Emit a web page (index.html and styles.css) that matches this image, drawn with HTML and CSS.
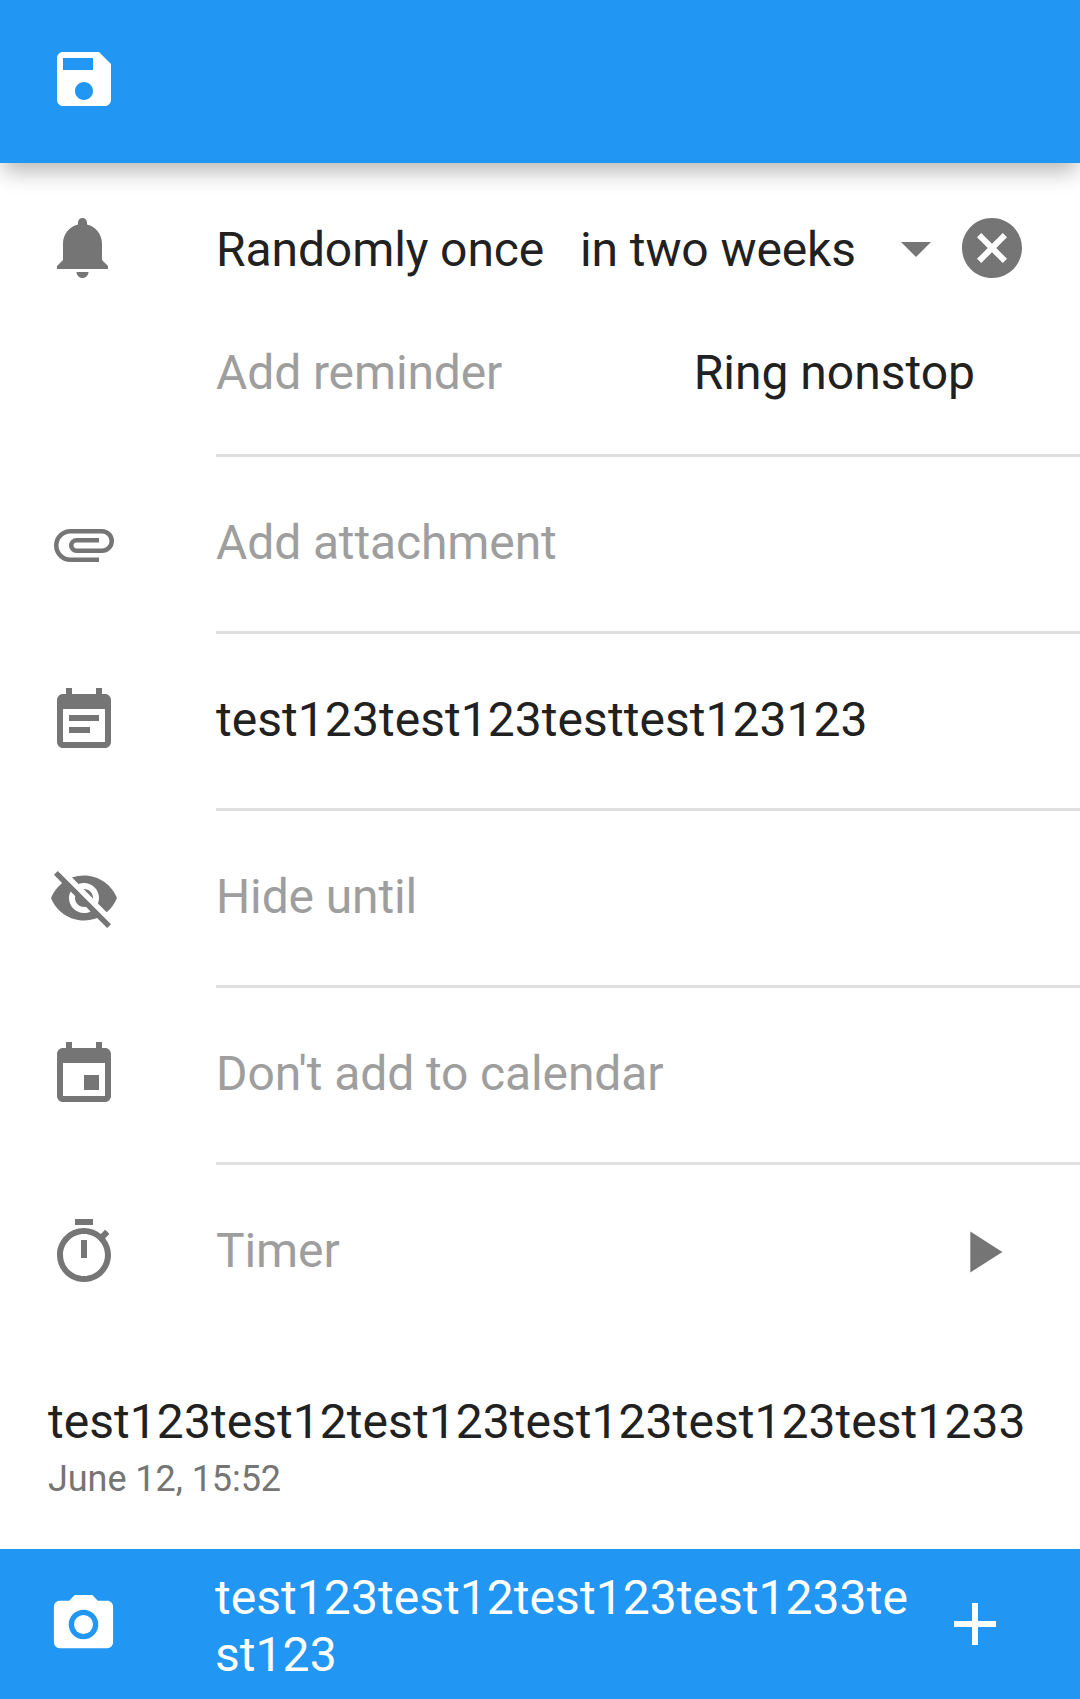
FILE: index.html
```html
<!DOCTYPE html>
<html lang="en">
<head>
<meta charset="utf-8">
<title>Edit task</title>
<link rel="stylesheet" href="styles.css">
</head>
<body>
<div class="screen">
  <header class="toolbar">
    <svg class="icon" viewBox="0 0 24 24"><path d="M17 3H5c-1.11 0-2 .9-2 2v14c0 1.1.89 2 2 2h14c1.1 0 2-.9 2-2V7l-4-4zm-5 16c-1.66 0-3-1.34-3-3s1.34-3 3-3 3 1.34 3 3-1.34 3-3 3zm3-10H5V5h10v4z"/></svg>
  </header>

  <main class="rows">
    <section class="row row-reminder">
      <svg class="icon" viewBox="0 0 24 24"><path d="M11.5 22c1.1 0 2-.9 2-2h-4c0 1.1.9 2 2 2zm6.5-6v-5.5c0-3.07-2.13-5.64-5-6.32V3.5c0-.83-.67-1.5-1.5-1.5S10 2.67 10 3.5v.68c-2.87.68-5 3.25-5 6.32V16l-2 2v1h17v-1l-2-2z"/></svg>
      <div class="content">
        <div class="line line-first">
          <span class="label">Randomly once</span>
          <span class="interval">in two weeks</span>
          <svg class="icon caret" viewBox="0 0 24 24"><path d="M7 10l5 5 5-5z"/></svg>
          <svg class="icon" viewBox="0 0 24 24"><path d="M12 2C6.47 2 2 6.47 2 12s4.47 10 10 10 10-4.47 10-10S17.53 2 12 2zm5 13.59L15.59 17 12 13.41 8.41 17 7 15.59 10.59 12 7 8.41 8.41 7 12 10.59 15.59 7 17 8.41 13.41 12 17 15.59z"/></svg>
        </div>
        <div class="line line-second">
          <span class="hint">Add reminder</span>
          <span class="ring">Ring nonstop</span>
        </div>
      </div>
    </section>

    <section class="row">
      <svg class="icon" viewBox="0 0 24 24"><path class="clip" d="M17 17.25H7.5a4.75 4.75 0 0 1 0-9.5H18a3.25 3.25 0 0 1 0 6.5H9.5a1.75 1.75 0 0 1 0-3.5H17"/></svg>
      <div class="content hint">Add attachment</div>
    </section>

    <section class="row">
      <svg class="icon" viewBox="0 0 24 24"><path d="M17 10H7v2h10v-2zm2-7h-1V1h-2v2H8V1H6v2H5c-1.11 0-1.99.9-1.99 2L3 19c0 1.1.89 2 2 2h14c1.1 0 2-.9 2-2V5c0-1.1-.9-2-2-2zm0 16H5V8h14v11zm-5-5H7v2h7v-2z"/></svg>
      <div class="content">test123test123testtest123123</div>
    </section>

    <section class="row">
      <svg class="icon" viewBox="0 0 24 24"><path d="M12 7c2.76 0 5 2.24 5 5 0 .65-.13 1.26-.36 1.83l2.92 2.92c1.51-1.26 2.7-2.89 3.43-4.75-1.73-4.39-6-7.5-11-7.5-1.4 0-2.74.25-3.98.7l2.16 2.16C10.74 7.13 11.35 7 12 7zM2 4.27l2.28 2.28.46.46C3.08 8.3 1.78 10.02 1 12c1.73 4.39 6 7.5 11 7.5 1.55 0 3.03-.3 4.38-.84l.42.42L19.73 22 21 20.73 3.27 3 2 4.27zM7.53 9.8l1.55 1.55c-.05.21-.08.43-.08.65 0 1.66 1.34 3 3 3 .22 0 .44-.03.65-.08l1.55 1.55c-.67.33-1.41.53-2.2.53-2.76 0-5-2.24-5-5 0-.79.2-1.53.53-2.2zm4.31-.78l3.15 3.15.02-.16c0-1.66-1.34-3-3-3l-.17.01z"/></svg>
      <div class="content hint">Hide until</div>
    </section>

    <section class="row">
      <svg class="icon" viewBox="0 0 24 24"><path d="M17 12h-5v5h5v-5zM16 1v2H8V1H6v2H5c-1.11 0-1.99.9-1.99 2L3 19c0 1.1.89 2 2 2h14c1.1 0 2-.9 2-2V5c0-1.1-.9-2-2-2h-1V1h-2zm3 18H5V8h14v11z"/></svg>
      <div class="content hint">Don't add to calendar</div>
    </section>

    <section class="row row-timer">
      <svg class="icon" viewBox="0 0 24 24"><path d="M15 1H9v2h6V1zm-4 13h2V8h-2v6zm8.03-6.61l1.42-1.42c-.43-.51-.9-.99-1.41-1.41l-1.42 1.42C16.07 4.74 14.12 4 12 4c-4.97 0-9 4.03-9 9s4.02 9 9 9 9-4.03 9-9c0-2.12-.74-4.07-1.97-5.61zM12 20c-3.87 0-7-3.13-7-7s3.13-7 7-7 7 3.13 7 7-3.13 7-7 7z"/></svg>
      <div class="content hint">Timer</div>
      <svg class="icon play" viewBox="0 0 24 24"><path d="M8 5v14l11-7z"/></svg>
    </section>

    <article class="comment">
      <p class="comment-text">test123test12test123test123test123test1233</p>
      <p class="comment-date">June 12, 15:52</p>
    </article>
  </main>

  <footer class="composer">
    <svg class="icon camera" viewBox="0 0 24 24"><circle cx="12" cy="12" r="3.2"/><path d="M9 2L7.17 4H4c-1.1 0-2 .9-2 2v12c0 1.1.9 2 2 2h16c1.1 0 2-.9 2-2V6c0-1.1-.9-2-2-2h-3.17L15 2H9zm3 15c-2.76 0-5-2.24-5-5s2.24-5 5-5 5 2.24 5 5-2.24 5-5 5z"/></svg>
    <div class="draft">test123test12test123test1233test123</div>
    <svg class="icon" viewBox="0 0 24 24"><path d="M19 13h-6v6h-2v-6H5v-2h6V5h2v6h6v2z"/></svg>
  </footer>
</div>
</body>
</html>
```
FILE: styles.css
```css
* {
  box-sizing: border-box;
}

body {
  margin: 0;
  background: #fff;
  color: #212121;
  font: 48px/57px Roboto, sans-serif;
  letter-spacing: 0.05px;
}

.screen {
  display: flex;
  flex-direction: column;
  width: 1080px;
  height: 1699px;
  overflow: hidden;
}

.icon {
  display: block;
  flex: none;
  width: 72px;
  height: 72px;
  fill: #757575;
}

.clip {
  fill: none;
  stroke: #757575;
  stroke-width: 1.5;
}

.toolbar {
  flex: none;
  height: 163px;
  padding: 43px 48px 0;
  background: #2196f3;
  box-shadow: 0 12px 20px -3px rgba(0, 0, 0, 0.27);
}

.toolbar .icon,
.composer .icon {
  fill: #fff;
}

.rows {
  flex: 1;
}

.row {
  display: flex;
  align-items: center;
  height: 177px;
  padding-left: 48px;
}

.row > .icon {
  margin-bottom: 3px;
}

.content {
  display: flex;
  flex: 1;
  align-items: center;
  height: 177px;
  margin-left: 96px;
  padding-bottom: 6px;
  padding-top: 3px;
  border-bottom: 3px solid #e0e0e0;
  white-space: nowrap;
}

.hint {
  color: #9e9e9e;
  letter-spacing: -0.12px;
}

.row-reminder {
  align-items: flex-start;
  height: 294px;
}

.row-reminder > .icon {
  margin-top: 49px;
}

.row-reminder .content {
  flex-direction: column;
  align-items: stretch;
  height: 294px;
  padding: 49px 52px 0 0;
}

.line {
  display: flex;
  align-items: center;
  justify-content: space-between;
}

.line-first {
  justify-content: flex-start;
  height: 72px;
  letter-spacing: -0.1px;
}

.label,
.interval {
  padding-top: 2px;
}

.interval {
  width: 300px;
  margin-left: auto;
}

.line-first .icon {
  margin-left: 4px;
}

.line-first .caret {
  margin-left: 0;
}

.line-second {
  height: 57px;
  margin-top: 60px;
  padding-right: 53px;
}

.ring {
  letter-spacing: 0;
}

.row-timer .content {
  border-color: transparent;
}

.row-timer .play {
  width: 70px;
  height: 70px;
  margin-right: 63px;
}

.comment {
  padding: 51px 48px 0;
}

.comment p {
  margin: 0;
  white-space: nowrap;
}

.comment .comment-date {
  margin-top: 5px;
  color: #757575;
  font-size: 36px;
  line-height: 48px;
  letter-spacing: -0.05px;
}

.composer {
  display: flex;
  flex: none;
  align-items: center;
  height: 150px;
  padding: 0 69px 0 48px;
  background: #2196f3;
  color: #fff;
}

.composer .camera {
  width: 71px;
  height: 71px;
}

.draft {
  width: 700px;
  margin: 4px auto 0 96px;
  word-break: break-all;
}
```
